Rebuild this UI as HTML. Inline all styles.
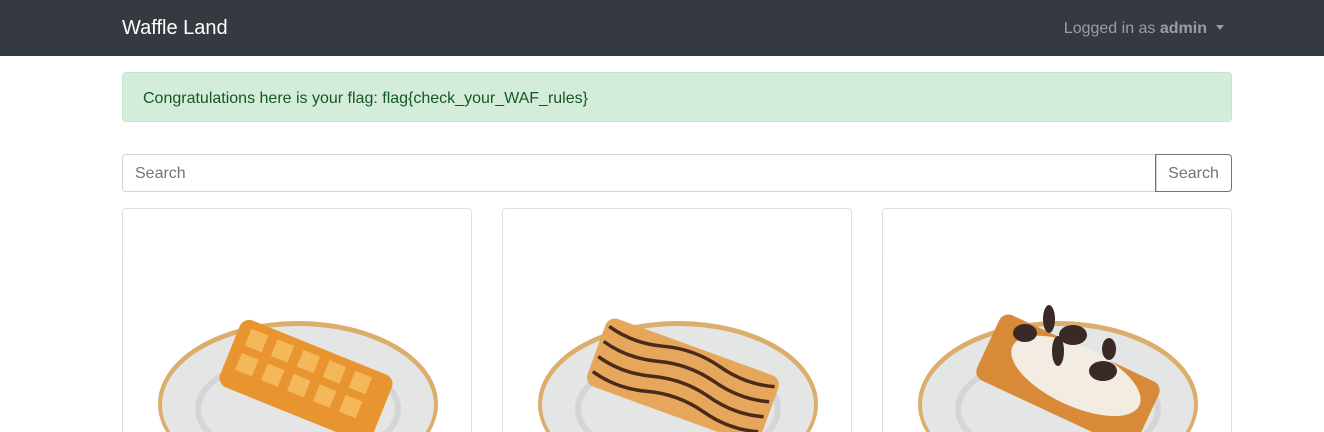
<!DOCTYPE html>
<html style="overflow:hidden"><head><style>
html,body{overflow:hidden}
body{margin:0;font-family:"Liberation Sans",sans-serif;background:#fff;width:1324px;height:432px;position:relative}
.nav{position:absolute;top:0;left:0;width:1324px;height:56px;background:#343a40}
.brand{position:absolute;left:122px;top:17px;font-size:20px;color:#fff}
.user{position:absolute;right:100px;top:20px;font-size:16px;color:rgba(255,255,255,.5)}
.user b{font-weight:bold}
.caret{display:inline-block;margin-left:9px;vertical-align:3px;border-top:5px solid rgba(255,255,255,.5);border-left:4.5px solid transparent;border-right:4.5px solid transparent}
.alert{position:absolute;left:122px;top:72px;width:1108px;height:48px;background:#d4edda;border:1px solid #c3e6cb;border-radius:4px;color:#155724;font-size:16px;line-height:51px;box-sizing:content-box}
.alert span{margin-left:20px}
.inp{position:absolute;left:122px;top:154px;width:1033px;height:36px;border:1px solid #ced4da;border-radius:4px 0 0 4px;color:#6c757d;font-size:16px;line-height:38px;box-sizing:content-box}
.inp span{margin-left:12px}
.btn{position:absolute;left:1155px;top:154px;width:75px;height:36px;border:1px solid #6c757d;border-radius:0 4px 4px 0;color:#6c757d;font-size:16px;line-height:38px;text-align:center}
.card{position:absolute;top:208px;width:348px;height:224px;border:1px solid rgba(0,0,0,.125);border-bottom:none;border-radius:4px 4px 0 0;overflow:hidden}
.card svg{position:absolute;left:0;top:0}
</style></head><body>
<div class="nav"><div class="brand">Waffle Land</div><div class="user">Logged in as <b>admin</b><span class="caret"></span></div></div>
<div class="alert"><span>Congratulations here is your flag: flag{check_your_WAF_rules}</span></div>
<div class="inp"><span>Search</span></div>
<div class="btn">Search</div>

<div class="card" style="left:122px"><svg width="348" height="224">
<ellipse cx="175" cy="195" rx="140" ry="83" fill="#dcae6c"/><ellipse cx="175" cy="196" rx="136" ry="79" fill="#e4e6e5"/>
<ellipse cx="175" cy="200" rx="100" ry="52" fill="none" stroke="#d3d6d5" stroke-width="6"/>
<g transform="translate(183,172) rotate(22)"><rect x="-82" y="-36" width="164" height="72" rx="10" fill="#e8942f"/>
<g fill="#f4b75a"><rect x="-70" y="-28" width="18" height="18"/><rect x="-42" y="-28" width="18" height="18"/><rect x="-14" y="-28" width="18" height="18"/><rect x="14" y="-28" width="18" height="18"/><rect x="42" y="-28" width="18" height="18"/>
<rect x="-70" y="-2" width="18" height="18"/><rect x="-42" y="-2" width="18" height="18"/><rect x="-14" y="-2" width="18" height="18"/><rect x="14" y="-2" width="18" height="18"/><rect x="42" y="-2" width="18" height="18"/></g></g>
</svg></div>

<div class="card" style="left:502px"><svg width="348" height="224">
<ellipse cx="175" cy="195" rx="140" ry="83" fill="#dcae6c"/><ellipse cx="175" cy="196" rx="136" ry="79" fill="#e4e6e5"/>
<ellipse cx="175" cy="200" rx="100" ry="52" fill="none" stroke="#d3d6d5" stroke-width="6"/>
<g transform="translate(180,172) rotate(20)"><rect x="-92" y="-36" width="184" height="72" rx="10" fill="#e6a65c"/>
<g stroke="#4a2a18" stroke-width="3.5" fill="none"><path d="M-88 -26 Q-60 -18 -30 -26 T30 -26 T88 -26"/><path d="M-88 -10 Q-60 -2 -30 -10 T30 -10 T88 -10"/><path d="M-88 6 Q-60 14 -30 6 T30 6 T88 6"/><path d="M-88 22 Q-60 30 -30 22 T30 22 T88 22"/></g></g>
</svg></div>

<div class="card" style="left:882px"><svg width="348" height="224">
<ellipse cx="175" cy="195" rx="140" ry="83" fill="#dcae6c"/><ellipse cx="175" cy="196" rx="136" ry="79" fill="#e4e6e5"/>
<ellipse cx="175" cy="200" rx="100" ry="52" fill="none" stroke="#d3d6d5" stroke-width="6"/>
<g transform="translate(185,172) rotate(25)"><rect x="-88" y="-36" width="176" height="72" rx="10" fill="#d98a38"/>
<ellipse cx="5" cy="-8" rx="70" ry="30" fill="#f3ece2"/></g>
<g fill="#3a2a26"><ellipse cx="142" cy="124" rx="12" ry="9"/><ellipse cx="166" cy="110" rx="6" ry="14"/><ellipse cx="190" cy="126" rx="14" ry="10"/><ellipse cx="175" cy="142" rx="6" ry="15"/><ellipse cx="226" cy="140" rx="7" ry="11"/><ellipse cx="220" cy="162" rx="14" ry="10"/></g>
</svg></div>
</body></html>
